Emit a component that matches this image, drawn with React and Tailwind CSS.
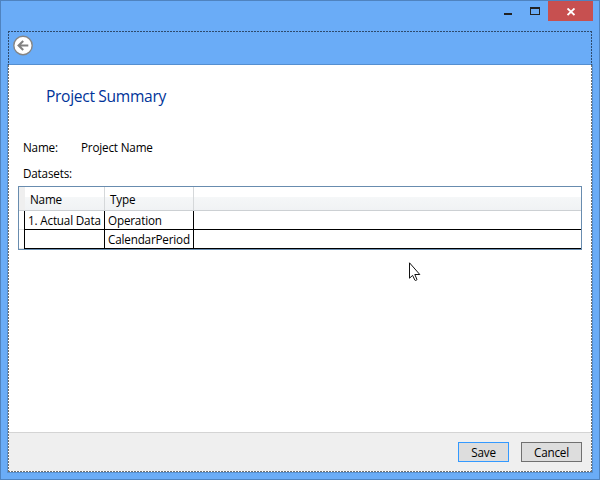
import React from "react";

function WindowControls() {
  return (
    <div className="flex h-[30px] shrink-0 justify-end pr-[6px]">
      <div className="mr-[10px] mt-[12px] h-[2px] w-[8px] bg-[#222]" />
      <div className="ml-[8px] mr-[8px] mt-[6px] h-[8px] w-[10px] border border-t-2 border-[#222]" />
      <div className="flex h-[20px] w-[45px] items-center justify-center bg-[#c75050]">
        <svg width="8" height="8" viewBox="0 0 8 8" className="mt-[2px] ml-[1px]" fill="none" stroke="#fff" strokeWidth="1.9">
          <path d="M.5 .5 7.5 7M7.5 .5 .5 7" />
        </svg>
      </div>
    </div>
  );
}

function BackButton() {
  return (
    <svg width="20" height="21" viewBox="0 0 20 21" className="ml-[5px] mt-[4px]" fill="none">
      <circle cx="10" cy="10.5" r="9.2" fill="#fff" stroke="#858585" strokeWidth="1.4" />
      <path d="M15.3 10.5H5.6M10.2 6 5.6 10.5l4.6 4.5" stroke="#808080" strokeWidth="2.1" />
    </svg>
  );
}

// Two-pixel dashes round the client area
function DashedFrame() {
  return (
    <div className="pointer-events-none absolute inset-0">
      <div className="absolute inset-x-0 top-0 h-px bg-[repeating-linear-gradient(90deg,#2e4b6d_0_2px,#6aacf7_2px_3px)]" />
      <div className="absolute left-0 top-0 h-[34px] w-px bg-[repeating-linear-gradient(180deg,#2e4b6d_0_2px,#6aacf7_2px_3px)]" />
      <div className="absolute right-0 top-0 h-[34px] w-px bg-[repeating-linear-gradient(180deg,#2e4b6d_0_2px,#6aacf7_2px_3px)]" />
      <div className="absolute bottom-0 left-0 top-[34px] w-px bg-[repeating-linear-gradient(180deg,#707070_0_2px,#fff_2px_3px)]" />
      <div className="absolute bottom-0 right-0 top-[34px] w-px bg-[repeating-linear-gradient(180deg,#707070_0_2px,#fff_2px_3px)]" />
      <div className="absolute inset-x-0 bottom-0 h-px bg-[repeating-linear-gradient(90deg,#707070_0_2px,#fff_2px_3px)]" />
    </div>
  );
}

function Row({ name, type }) {
  return (
    <div className="flex h-[19px] leading-[18px]">
      <div className="w-[5px] border-b border-[#e2e2e2]" />
      <div className="w-[81px] border-x border-b border-black pl-[3px]">{name}</div>
      <div className="w-[89px] border-b border-r border-black pl-[3px]">{type}</div>
      <div className="flex-1 border-b border-black" />
    </div>
  );
}

function DataGrid() {
  return (
    <div className="ml-[9px] h-[64px] w-[564px] border border-[#688caf] bg-white">
      <div className="flex h-[24px] border-b border-[#ccd0d3] bg-[linear-gradient(180deg,#fff_0_10px,#f5f7f8_10px,#f0f2f4)] leading-[25px]">
        <div className="w-[6px] bg-[#efefef]" />
        <div className="w-[80px] border-r border-[#d5d8da] pl-[5px]">Name</div>
        <div className="w-[89px] border-r border-[#d5d8da] pl-[5px]">Type</div>
      </div>
      <Row name="1. Actual Data" type="Operation" />
      <Row name="" type="CalendarPeriod" />
    </div>
  );
}

export default function App() {
  return (
    <div className="relative flex h-[480px] w-[600px] flex-col overflow-hidden whitespace-nowrap border border-[#4f83bf] bg-[#6aacf7] font-['Open_Sans','Noto_Sans',sans-serif] text-[11.7px] tracking-[-0.18px] text-black">
      <WindowControls />
      <div className="relative mx-[7px] flex h-[441px] flex-col">
        <div className="h-[34px] shrink-0 border-b border-[#558fd0]">
          <BackButton />
        </div>
        <div className="flex flex-1 flex-col bg-white pl-px">
          <h1 className="ml-[37px] mt-[20px] h-[22px] text-[15.6px] leading-[22px] tracking-[-0.32px] text-[#003399]">Project Summary</h1>
          <div className="ml-[14px] mt-[32px] flex h-[18px] leading-[16px]">
            <div className="w-[58px]">Name:</div>
            <div>Project Name</div>
          </div>
          <div className="ml-[14px] mt-[8px] h-[18px] leading-[16px]">Datasets:</div>
          <div className="mt-[3px]">
            <DataGrid />
          </div>
        </div>
        <div className="flex h-[40px] shrink-0 justify-end gap-[12px] border-t border-[#d4d4d4] bg-[#efefef] pr-[10px] pt-[9px]">
          <button className="h-[20px] w-[51px] border border-[#3399ff] bg-[#ddd] leading-[18px]">Save</button>
          <button className="h-[20px] w-[61px] border border-[#707070] bg-[#ddd] leading-[18px]">Cancel</button>
        </div>
        <DashedFrame />
        <div className="absolute -bottom-px -left-px -right-px top-[33px] border border-t-0 border-[#558fd0]" />
      </div>
      <svg width="13" height="20" viewBox="0 0 13 20" className="absolute left-[407px] top-[261px]">
        <path d="M1.5 .8V16.2L4.6 13.4l2.3 4.8c.4.7 2.3 0 2-.9L6.8 12.5h5Z" fill="#fff" stroke="#111" strokeWidth="1" />
      </svg>
    </div>
  );
}
